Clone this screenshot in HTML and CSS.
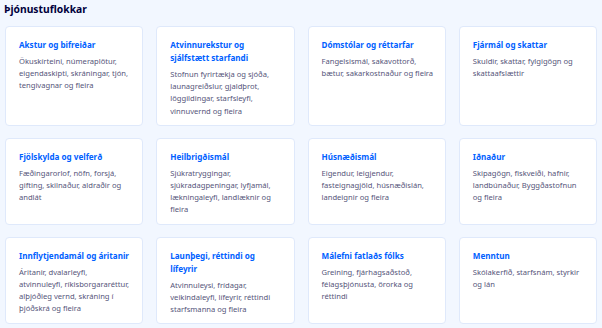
FILE: index.html
```html
<!DOCTYPE html>
<html lang="is">
<head>
    <meta charset="UTF-8">
    <meta name="viewport" content="width=device-width, initial-scale=1.0">
    <title>Þjónustuflokkar</title>
    <link rel="stylesheet" href="styles.css">
</head>
<body>

    <div class="page">
        <h2 class="heading">Þjónustuflokkar</h2>

        <!-- Category cards -->
        <div class="grid">
            <a class="card" href="#">
                <h3 class="card-title">Akstur og bifreiðar</h3>
                <p class="card-text">Ökuskírteini, númeraplötur, eigendaskipti, skráningar, tjón, tengivagnar og fleira</p>
            </a>
            <a class="card" href="#">
                <h3 class="card-title">Atvinnurekstur og sjálfstætt starfandi</h3>
                <p class="card-text">Stofnun fyrirtækja og sjóða, launagreiðslur, gjaldþrot, löggildingar, starfsleyfi, vinnuvernd og fleira</p>
            </a>
            <a class="card" href="#">
                <h3 class="card-title">Dómstólar og réttarfar</h3>
                <p class="card-text">Fangelsismál, sakavottorð, bætur, sakarkostnaður og fleira</p>
            </a>
            <a class="card" href="#">
                <h3 class="card-title">Fjármál og skattar</h3>
                <p class="card-text">Skuldir, skattar, fylgigögn og skattaafslættir</p>
            </a>

            <a class="card" href="#">
                <h3 class="card-title">Fjölskylda og velferð</h3>
                <p class="card-text">Fæðingarorlof, nöfn, forsjá, gifting, skilnaður, aldraðir og andlát</p>
            </a>
            <a class="card" href="#">
                <h3 class="card-title">Heilbrigðismál</h3>
                <p class="card-text">Sjúkratryggingar, sjúkradagpeningar, lyfjamál, lækningaleyfi, landlæknir og fleira</p>
            </a>
            <a class="card" href="#">
                <h3 class="card-title">Húsnæðismál</h3>
                <p class="card-text">Eigendur, leigjendur, fasteignagjöld, húsnæðislán, landeignir og fleira</p>
            </a>
            <a class="card" href="#">
                <h3 class="card-title">Iðnaður</h3>
                <p class="card-text">Skipagögn, fiskveiði, hafnir, landbúnaður, Byggðastofnun og fleira</p>
            </a>

            <a class="card" href="#">
                <h3 class="card-title">Innflytjendamál og áritanir</h3>
                <p class="card-text">Áritanir, dvalarleyfi, atvinnuleyfi, ríkisborgararéttur, alþjóðleg vernd, skráning í þjóðskrá og fleira</p>
            </a>
            <a class="card" href="#">
                <h3 class="card-title">Launþegi, réttindi og lífeyrir</h3>
                <p class="card-text">Atvinnuleysi, frídagar, veikindaleyfi, lífeyrir, réttindi starfsmanna og fleira</p>
            </a>
            <a class="card" href="#">
                <h3 class="card-title">Málefni fatlaðs fólks</h3>
                <p class="card-text">Greining, fjárhagsaðstoð, félagsþjónusta, örorka og réttindi</p>
            </a>
            <a class="card" href="#">
                <h3 class="card-title">Menntun</h3>
                <p class="card-text">Skólakerfið, starfsnám, styrkir og lán</p>
            </a>
        </div>
    </div>

</body>
</html>
```

FILE: styles.css
```css
body {
    font-family: "Noto Sans", "Open Sans", sans-serif;
    background-color: #f2f7ff;
    margin: 0;
    padding: 0;
}

.page {
    padding: 3px 5px 8px 5px;
}

.heading {
    margin: 0 0 11px -1px;
    font-size: 10.3px;
    line-height: 12px;
    font-weight: 700;
    color: #00003c;
}

.grid {
    display: grid;
    grid-template-columns: repeat(4, 1fr);
    gap: 12px 13px;
}

.card {
    display: block;
    background-color: white;
    border: 1px solid #dfe9fb;
    border-radius: 4px;
    padding: 11px 10px 8px 13px;
    text-decoration: none;
}

.card-title {
    margin: 0 0 4px 0;
    font-size: 8.1px;
    line-height: 13px;
    font-weight: 700;
    color: #0061ff;
}

.card-text {
    margin: 0;
    font-size: 7.6px;
    line-height: 12.2px;
    color: #55557a;
}
```
